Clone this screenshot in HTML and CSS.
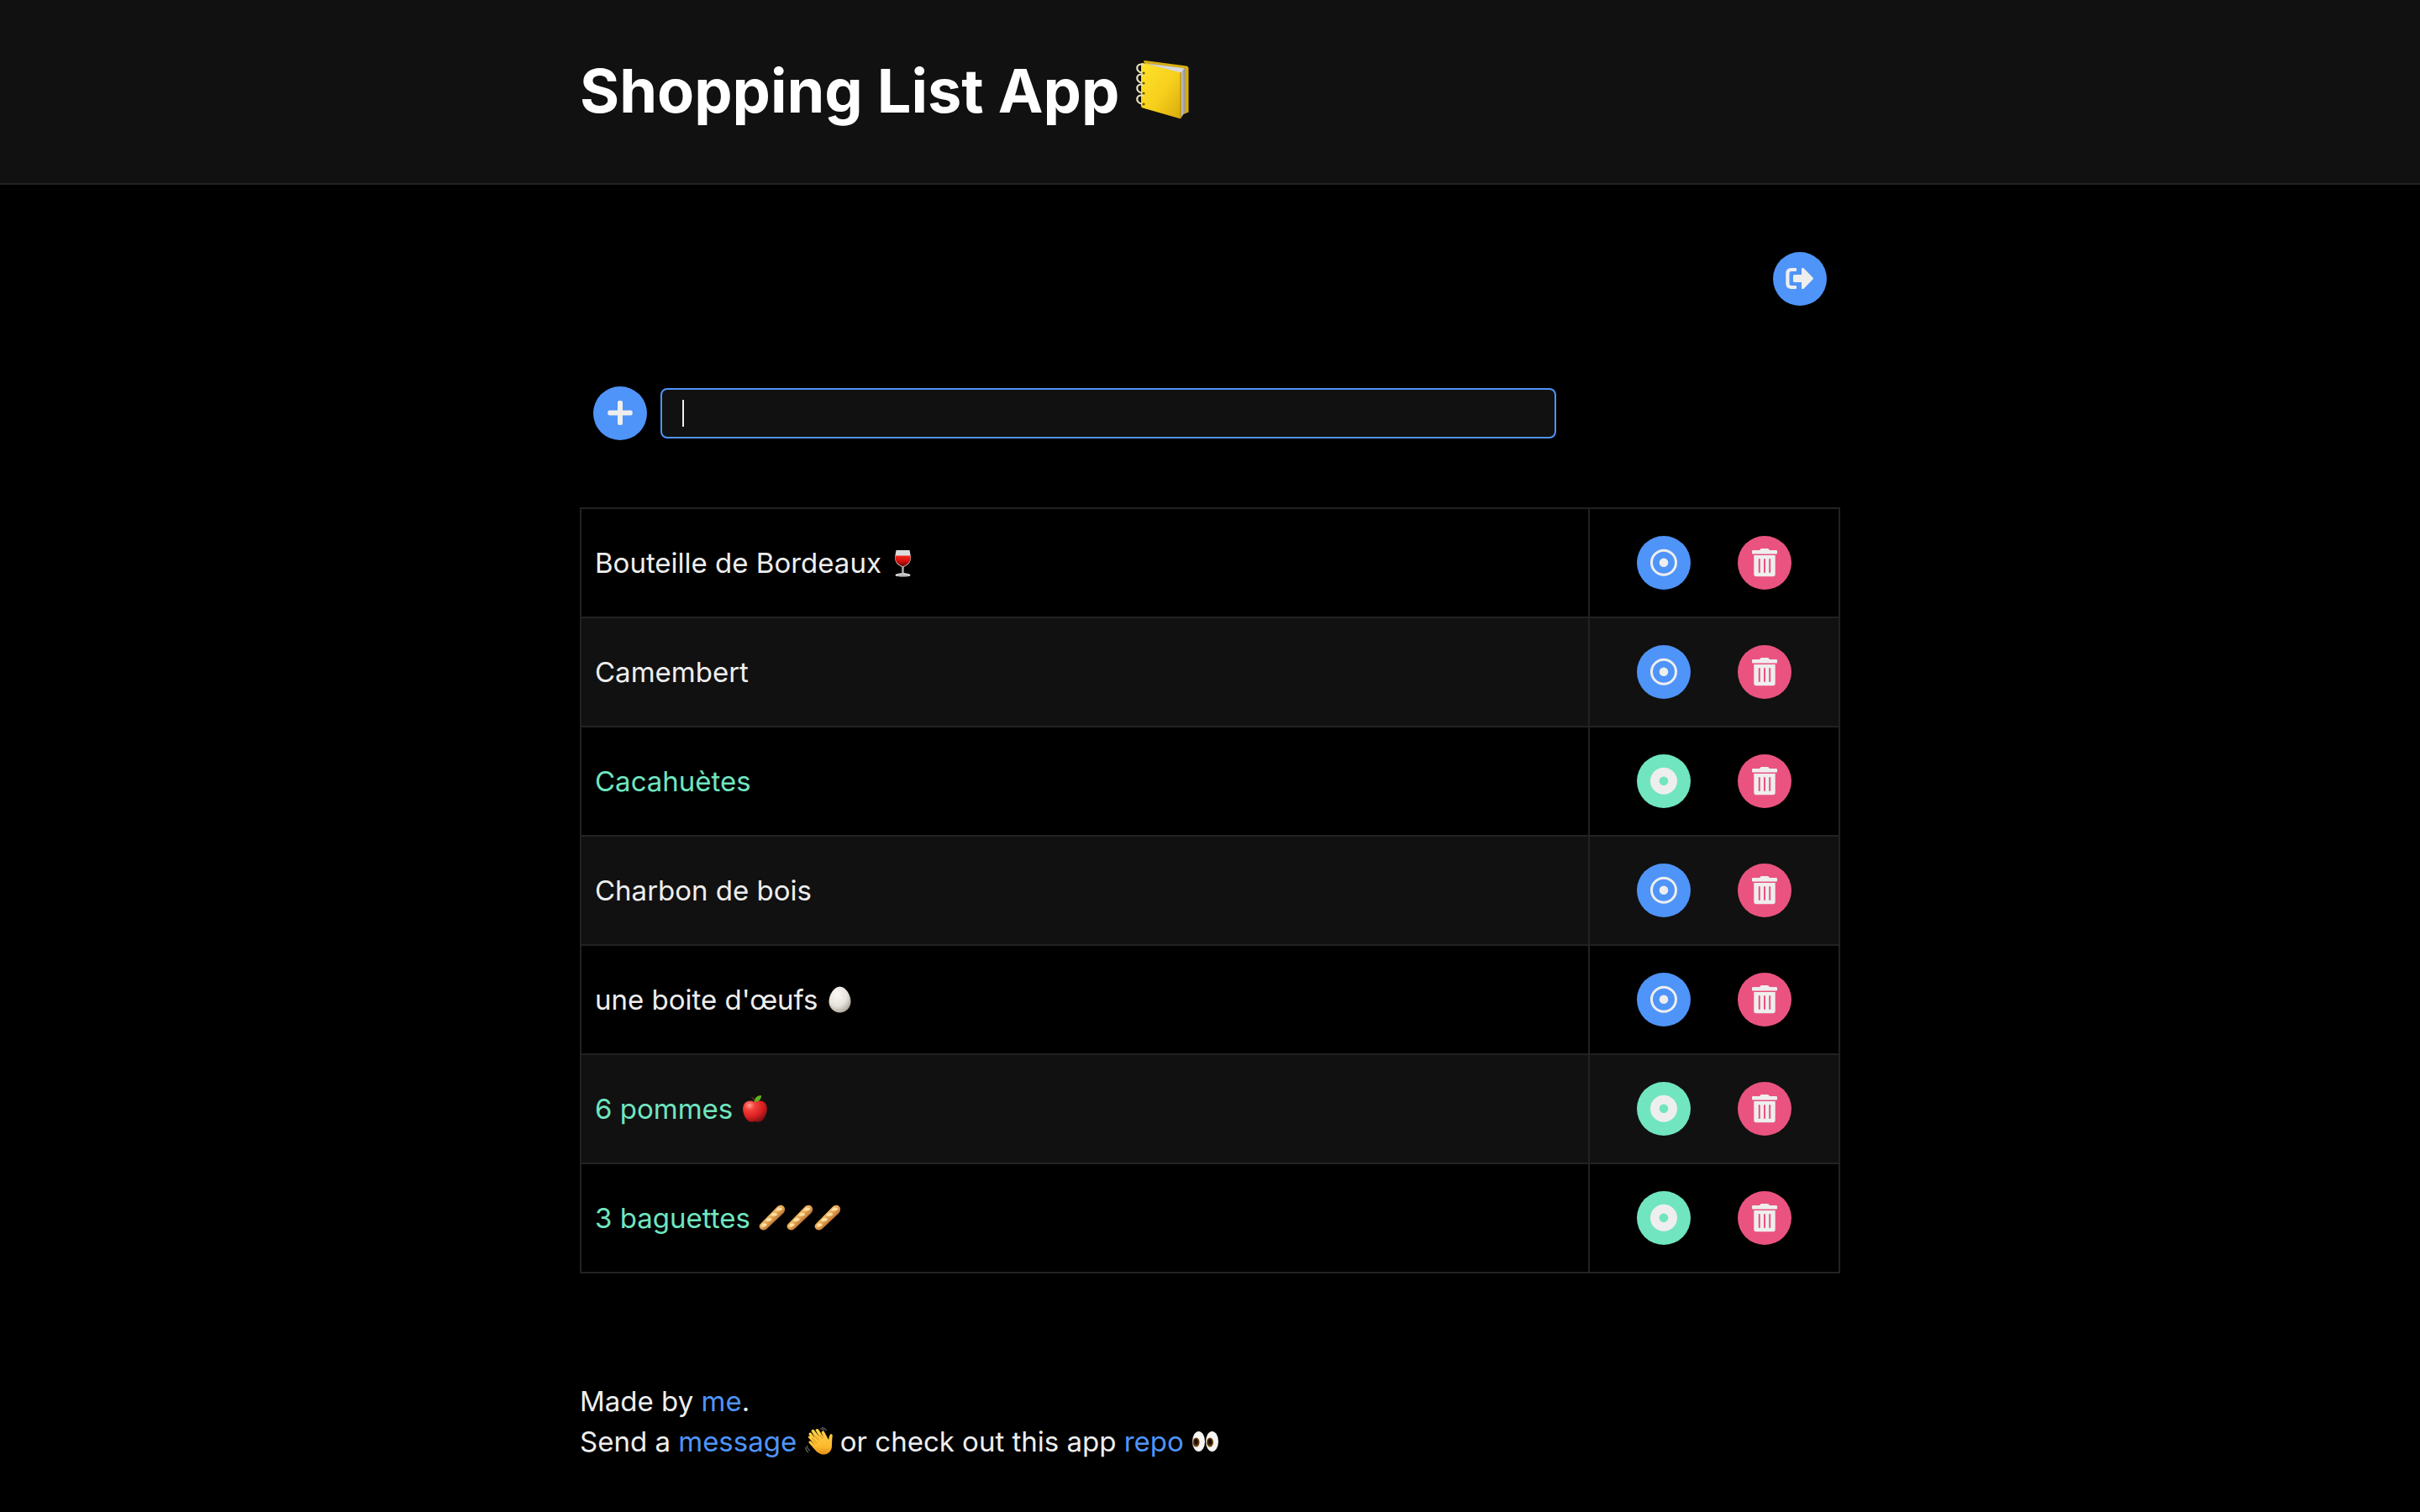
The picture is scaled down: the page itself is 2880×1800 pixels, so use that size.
FILE: index.html
```html
<!DOCTYPE html>
<html lang="en">
<head>
<meta charset="utf-8">
<meta name="viewport" content="width=device-width, initial-scale=1">
<title>Shopping List App</title>
<link rel="stylesheet" href="styles.css">
</head>
<body>
<svg class="sprite" aria-hidden="true">
  <defs>
    <linearGradient id="g-cover" x1="0" y1="0" x2="1" y2="1"><stop offset="0" stop-color="#ffe32d"/><stop offset=".55" stop-color="#f6cf1c"/><stop offset="1" stop-color="#d9aa0a"/></linearGradient>
    <linearGradient id="g-pages" x1="0" y1="0" x2="1" y2="0"><stop offset="0" stop-color="#8d8d8d"/><stop offset=".9" stop-color="#c4c4c4"/><stop offset="1" stop-color="#909090"/></linearGradient>
    <linearGradient id="g-wine" x1="0" y1="0" x2="0" y2="1"><stop offset="0" stop-color="#f2281d"/><stop offset=".5" stop-color="#d5100c"/><stop offset="1" stop-color="#5e0505"/></linearGradient>
    <radialGradient id="g-egg" cx=".38" cy=".3" r=".75"><stop offset="0" stop-color="#fbf9f5"/><stop offset=".6" stop-color="#e6e3dc"/><stop offset="1" stop-color="#aaa398"/></radialGradient>
    <radialGradient id="g-apple" cx=".28" cy=".22" r=".85"><stop offset="0" stop-color="#ffa08c"/><stop offset=".25" stop-color="#f5413d"/><stop offset=".65" stop-color="#d81f21"/><stop offset="1" stop-color="#7d1012"/></radialGradient>
    <linearGradient id="g-bread" x1=".3" y1=".3" x2=".7" y2=".7"><stop offset="0" stop-color="#f6c774"/><stop offset=".5" stop-color="#e3a552"/><stop offset="1" stop-color="#a95a2a"/></linearGradient>
    <linearGradient id="g-hand" x1="0" y1="0" x2="0" y2="1"><stop offset="0" stop-color="#ffd34a"/><stop offset=".7" stop-color="#fcb92d"/><stop offset="1" stop-color="#e58d18"/></linearGradient>
    <symbol id="notebook" viewBox="0 0 72 72">
      <path d="M12 2.500Q12 .7 15 1.200L63 7.500Q65.500 8 65.500 10V62.500L57 66Z" fill="#d9ad12"/>
      <path d="M14 4 61.500 10.500V62L56 70 54 14Z" fill="url(#g-pages)"/>
      <path d="M14 4.500 60.500 10.500 56 16Z" fill="#d7d8da"/>
      <path d="M11 4 54.500 15Q56.500 15.500 56.500 17V68.500Q56.500 71 54.500 70L11 57.500Q9 57 9 55V5.500Q9 3.500 11 4Z" fill="url(#g-cover)"/>
      <path d="M56 15V70" stroke="#a98309" fill="none"/>
      <g fill="none" stroke="#e6e0c0" stroke-width="2.200"><path d="M12 6C2 3 2 15 10 15.500M12 18C2 15 2 27 10 27.500M12 30C2 27 2 39 10 39.500M12 43C2 40 2 52 10 52.500"/></g>
      <g fill="#6c5510"><circle cx="12" cy="16" r="1.600"/><circle cx="12" cy="28" r="1.600"/><circle cx="12" cy="40" r="1.600"/><circle cx="12" cy="53" r="1.600"/></g>
    </symbol>
    <symbol id="wine" viewBox="0 0 33 34">
      <path d="M8.500 2H24.500L26 10C26 17 22.500 19.500 17.500 22V29C21 29.500 25.500 30 25.500 32 25.500 34 7.500 34 7.500 32 7.500 30 12 29.500 15.500 29V22C10.500 19.500 7 17 7 10Z" fill="#dcdcdc"/>
      <path d="M7.500 8.500H25.500C26.500 16 22 19 16.500 21.500 11 19 6.500 16 7.500 8.500Z" fill="url(#g-wine)"/>
      <path d="M16 22V31M10 32H23" stroke="#999" fill="none"/>
    </symbol>
    <symbol id="egg" viewBox="0 0 33 34"><path d="M16.500 1.500C23 1.500 29.500 11 29.500 19 29.500 27 23.500 32.500 16.500 32.500 9.500 32.500 3.500 27 3.500 19 3.500 11 10 1.500 16.500 1.500Z" fill="url(#g-egg)"/></symbol>
    <symbol id="apple" viewBox="0 0 33 34">
      <path d="M16.500 10.500Q15.500 5 12.500 3" fill="none" stroke="#6a2c1b" stroke-width="1.500"/>
      <path d="M16.500 9C13 7 7.500 6.500 4.500 10 0 15 2.500 25 7 30 10 33.500 13.500 33 16.500 32 19.500 33 23 33.500 26 30 30.500 25 33 15 28.500 10 25.500 6.500 20 7 16.500 9Z" fill="url(#g-apple)"/>
      <path d="M16 9C15.500 4 19 1 24 1 24.500 5 21 9 16 9Z" fill="#61b31a"/>
    </symbol>
    <symbol id="baguette" viewBox="0 0 33 34">
      <path d="M2.500 24.500 22.500 4C25 1.500 29 1 31 3.500 33 6 32 9 30.500 11L11 29.500C8.500 32 5 32 3 30 1.500 28.500 1 26 2.500 24.500Z" fill="url(#g-bread)"/>
      <path d="M5 24Q9 22 11 25 8 29 4 27ZM11 17.500Q15 15.500 17 19 14 22 9 20.500ZM17 11.500Q21 9.500 23.500 13 20 16 15 14ZM23 5.500Q27 3 29.500 6.500 26 9.500 21 8Z" fill="#ffe0a0"/>
    </symbol>
    <symbol id="wave" viewBox="0 0 33 34">
      <path d="M8.500 15 4.500 8.500Q4.500 6 7 6.500L12 13 7.500 4.500Q8 2 10.500 3L17 11.500 12.500 3.500Q13.500 1 16 2.500L22 12 19.500 6Q21 3.500 23 5.500L28 15Q29 8.500 31 8 33.500 8.500 32.500 12 32 18 32 22C32 29 27.500 32 23 32.500 18 33 14 29.500 11.500 26.500L4.500 18.500Q4 16 7 16.500L12 21 4 12.500Q3.500 9.500 6.500 11L14 18.500Z" fill="url(#g-hand)"/>
      <path d="M8.500 13 14 19M12 10.500 17 16M17 9 21 14" fill="none" stroke="#d28a1b"/>
      <path d="M18 2Q21 1.500 23 4.500M20 .5Q24 1 25.500 4M2.500 22Q2.500 26 6 28M.5 24Q1 28 4 30" fill="none" stroke="#666" stroke-width="1.200"/>
    </symbol>
    <symbol id="eyes" viewBox="0 0 33 34">
      <ellipse cx="8.500" cy="17" rx="7.500" ry="12" fill="#f7f5f2"/><ellipse cx="24.500" cy="17" rx="7.500" ry="12" fill="#f7f5f2"/>
      <ellipse cx="5.500" cy="18" rx="4" ry="5.500" fill="#70420e"/><ellipse cx="22" cy="18" rx="4" ry="5.500" fill="#70420e"/>
      <ellipse cx="5.500" cy="17.500" rx="2.300" ry="3.500" fill="#17100b"/><ellipse cx="22" cy="17.500" rx="2.300" ry="3.500" fill="#17100b"/>
    </symbol>
    <symbol id="target" viewBox="0 0 36 36"><circle cx="18" cy="17.700" r="14.500" fill="none" stroke="currentColor" stroke-width="3"/><circle cx="18" cy="17.700" r="5.300" fill="currentColor"/></symbol>
    <symbol id="disc" viewBox="0 0 36 36"><circle cx="18" cy="17.700" r="10.650" fill="none" stroke="currentColor" stroke-width="10.700"/></symbol>
    <symbol id="trash" viewBox="0 0 36 36"><path fill="currentColor" fill-rule="evenodd" d="M4.200 3H12L13.200 1.400Q13.500 1 14.200 1H21.800Q22.500 1 22.800 1.400L24 3H31.800Q33 3 33 4.200V6.500Q33 7.500 31.800 7.500H4.200Q3 7.500 3 6.500V4.200Q3 3 4.200 3ZM5.300 9H30.700V31.500Q30.700 34.300 28 34.300H8Q5.300 34.300 5.300 31.500ZM10.800 14V29Q10.800 30 11.800 30T12.800 29V14Q12.800 13 11.800 13T10.800 14ZM17 14V29Q17 30 18 30T19 29V14Q19 13 18 13T17 14ZM23.200 14V29Q23.200 30 24.200 30T25.200 29V14Q25.200 13 24.200 13T23.200 14Z"/></symbol>
    <symbol id="plus" viewBox="0 0 36 36"><path fill="currentColor" d="M17 3H19Q21 3 21 5V14.500H30.500Q32.700 14.500 32.700 16.500V18.500Q32.700 20.500 30.500 20.500H21V30Q21 32 19 32H17Q15 32 15 30V20.500H5.500Q3.300 20.500 3.300 18.500V16.500Q3.300 14.500 5.500 14.500H15V5Q15 3 17 3Z"/></symbol>
    <symbol id="logout" viewBox="0 0 36 36"><path fill="currentColor" d="M13 5H8Q1.300 5 1.300 11.500V23.500Q1.300 30 8 30H13Q14 30 14 29V27Q14 26 13 26H8Q5.500 26 5.500 23.500V11.500Q5.500 9 8 9H13Q14 9 14 8V6Q14 5 13 5ZM33.500 16.500 22.500 5.300Q20 4 20 6.500V13H11.500Q10 13 10 14.500V20.500Q10 22 11.500 22H20V28.500Q20 31 22.500 29.700L33.500 18.500Q34.500 17.500 33.500 16.500Z"/></symbol>
  </defs>
</svg>

<header class="site-header">
  <div class="container">
    <h1 class="title">Shopping List App <svg class="emoji-large" role="img" aria-label="notebook"><use href="#notebook"/></svg></h1>
  </div>
</header>

<main class="container">
  <div class="toolbar">
    <button class="icon-button" type="button" aria-label="Log out"><svg class="icon"><use href="#logout"/></svg></button>
  </div>

  <form class="add-form">
    <button class="icon-button" type="button" aria-label="Add item"><svg class="icon"><use href="#plus"/></svg></button>
    <div class="field"><input class="field-input" type="text" aria-label="New item"></div>
  </form>

  <table class="items">
    <tbody>
      <tr>
        <td class="item-name">Bouteille de Bordeaux <svg class="emoji" role="img" aria-label="wine"><use href="#wine"/></svg></td>
        <td class="item-actions"><div class="actions"><button class="icon-button" type="button" aria-label="Mark done"><svg class="icon"><use href="#target"/></svg></button><button class="icon-button danger" type="button" aria-label="Delete"><svg class="icon"><use href="#trash"/></svg></button></div></td>
      </tr>
      <tr>
        <td class="item-name">Camembert</td>
        <td class="item-actions"><div class="actions"><button class="icon-button" type="button" aria-label="Mark done"><svg class="icon"><use href="#target"/></svg></button><button class="icon-button danger" type="button" aria-label="Delete"><svg class="icon"><use href="#trash"/></svg></button></div></td>
      </tr>
      <tr>
        <td class="item-name done">Cacahuètes</td>
        <td class="item-actions"><div class="actions"><button class="icon-button success" type="button" aria-label="Mark not done"><svg class="icon"><use href="#disc"/></svg></button><button class="icon-button danger" type="button" aria-label="Delete"><svg class="icon"><use href="#trash"/></svg></button></div></td>
      </tr>
      <tr>
        <td class="item-name">Charbon de bois</td>
        <td class="item-actions"><div class="actions"><button class="icon-button" type="button" aria-label="Mark done"><svg class="icon"><use href="#target"/></svg></button><button class="icon-button danger" type="button" aria-label="Delete"><svg class="icon"><use href="#trash"/></svg></button></div></td>
      </tr>
      <tr>
        <td class="item-name">une boite d'œufs <svg class="emoji" role="img" aria-label="egg"><use href="#egg"/></svg></td>
        <td class="item-actions"><div class="actions"><button class="icon-button" type="button" aria-label="Mark done"><svg class="icon"><use href="#target"/></svg></button><button class="icon-button danger" type="button" aria-label="Delete"><svg class="icon"><use href="#trash"/></svg></button></div></td>
      </tr>
      <tr>
        <td class="item-name done">6 pommes <svg class="emoji" role="img" aria-label="apple"><use href="#apple"/></svg></td>
        <td class="item-actions"><div class="actions"><button class="icon-button success" type="button" aria-label="Mark not done"><svg class="icon"><use href="#disc"/></svg></button><button class="icon-button danger" type="button" aria-label="Delete"><svg class="icon"><use href="#trash"/></svg></button></div></td>
      </tr>
      <tr>
        <td class="item-name done">3 baguettes <svg class="emoji" role="img" aria-label="baguette"><use href="#baguette"/></svg><svg class="emoji" role="img" aria-label="baguette"><use href="#baguette"/></svg><svg class="emoji" role="img" aria-label="baguette"><use href="#baguette"/></svg></td>
        <td class="item-actions"><div class="actions"><button class="icon-button success" type="button" aria-label="Mark not done"><svg class="icon"><use href="#disc"/></svg></button><button class="icon-button danger" type="button" aria-label="Delete"><svg class="icon"><use href="#trash"/></svg></button></div></td>
      </tr>
    </tbody>
  </table>
</main>

<footer class="container footer">
  <div>Made by <a class="link" href="#me">me</a>.</div>
  <div>Send a <a class="link" href="#message">message</a> <svg class="emoji" role="img" aria-label="waving hand"><use href="#wave"/></svg> or check out this app <a class="link" href="#repo">repo</a> <svg class="emoji" role="img" aria-label="eyes"><use href="#eyes"/></svg></div>
</footer>
</body>
</html>
```
FILE: styles.css
```css
:root {
  --bg: #000;
  --surface: #111;
  --line: #222;
  --text: #eee;
  --blue: #4f94f8;
  --pink: #ea5380;
  --green: #70e5c0;
}

* { box-sizing: border-box; }

body {
  margin: 0;
  background: var(--bg);
  color: var(--text);
  font-family: Inter, "Liberation Sans", sans-serif;
  font-size: 33px;
  line-height: 48px;
}

.sprite { position: absolute; width: 0; height: 0; }

.container {
  width: 100%;
  max-width: 1500px;
  margin: 0 auto;
}

.site-header {
  padding: 64px 0 66px;
  background: var(--surface);
  border-bottom: 2px solid var(--line);
}

.title {
  margin: 0;
  color: #fff;
  font-size: 72px;
  font-weight: 700;
  line-height: 88px;
}

.emoji-large { width: 72px; height: 72px; vertical-align: -9px; }
.emoji { width: 33px; height: 34px; vertical-align: -5px; }

.toolbar {
  display: flex;
  justify-content: flex-end;
  padding: 80px 16px 0;
}

.icon-button {
  display: flex;
  flex: none;
  align-items: center;
  justify-content: center;
  width: 64px;
  height: 64px;
  padding: 0;
  border: 0;
  border-radius: 50%;
  background: var(--blue);
  color: var(--text);
  cursor: pointer;
}
.danger { background: var(--pink); }
.success { background: var(--green); }

.icon { width: 36px; height: 36px; }

.add-form {
  display: flex;
  align-items: center;
  gap: 16px;
  padding: 96px 16px 80px;
}

.field { position: relative; width: 100%; max-width: 1066px; }

.field::after {
  content: "";
  position: absolute;
  top: 14px;
  left: 26px;
  width: 2px;
  height: 32px;
  background: var(--text);
}

.field-input {
  display: block;
  width: 100%;
  height: 60px;
  padding: 0 24px;
  border: 2px solid var(--blue);
  border-radius: 8px;
  outline: 0;
  background: var(--surface);
  color: var(--text);
  font: inherit;
}

.items {
  width: 100%;
  border: 2px solid var(--line);
  border-spacing: 0;
}
.items tr:nth-child(even) { background: var(--surface); }
.items td { padding: 32px 16px; }
.items tr + tr td { border-top: 2px solid var(--line); }
.items .item-actions { width: 298px; border-left: 2px solid var(--line); }
.done { color: var(--green); }

.actions {
  display: flex;
  justify-content: center;
  gap: 56px;
}

.footer { padding: 128px 0 58px; }

.link { color: var(--blue); text-decoration: none; }
```
